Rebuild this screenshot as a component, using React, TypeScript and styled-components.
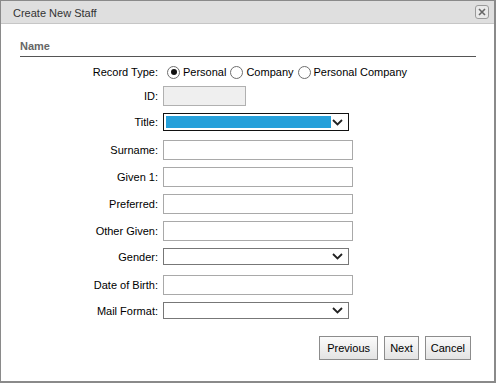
import React, { useState } from "react";
import styled, { createGlobalStyle } from "styled-components";

const GlobalStyle = createGlobalStyle`
  html, body {
    margin: 0;
    padding: 0;
    background: #fff;
    font-family: "Liberation Sans", Arial, sans-serif;
  }
`;

type Field =
  | { kind: "text"; label: string; disabled?: boolean; width?: number }
  | { kind: "select"; label: string; highlight?: boolean; focused?: boolean };

const fields: Field[] = [
  { kind: "text", label: "ID:", disabled: true, width: 83 },
  { kind: "select", label: "Title:", highlight: true, focused: true },
  { kind: "text", label: "Surname:" },
  { kind: "text", label: "Given 1:" },
  { kind: "text", label: "Preferred:" },
  { kind: "text", label: "Other Given:" },
  { kind: "select", label: "Gender:" },
  { kind: "text", label: "Date of Birth:" },
  { kind: "select", label: "Mail Format:" },
];

const recordTypes = ["Personal", "Company", "Personal Company"];

const Chevron = () => (
  <svg width="11" height="7" viewBox="0 0 11 7">
    <path d="M1 1 L5.5 5.5 L10 1" fill="none" stroke="#222" strokeWidth="1.8" />
  </svg>
);

export const App = () => {
  const [recordType, setRecordType] = useState("Personal");

  return (
    <>
      <GlobalStyle />
      <Dialog>
        <TitleBar>
          <TitleText>Create New Staff</TitleText>
          <CloseButton aria-label="close">
            <svg width="8" height="8" viewBox="0 0 8 8">
              <path d="M1 1 L7 7 M7 1 L1 7" stroke="#666" strokeWidth="1.6" />
            </svg>
          </CloseButton>
        </TitleBar>
        <Body>
          <SectionHeader>Name</SectionHeader>
          <RadioRow>
            <Label>Record Type:</Label>
            {recordTypes.map((t) => (
              <RadioLabel key={t}>
                <Radio
                  type="radio"
                  name="recordType"
                  checked={recordType === t}
                  onChange={() => setRecordType(t)}
                />
                {t}
              </RadioLabel>
            ))}
          </RadioRow>
          {fields.map((f) =>
            f.kind === "text" ? (
              <Row key={f.label} $h={20}>
                <Label>{f.label}</Label>
                <TextInput
                  type="text"
                  disabled={f.disabled}
                  $width={f.width ?? 190}
                />
              </Row>
            ) : (
              <Row key={f.label} $h={f.focused ? 18 : 17}>
                <Label>{f.label}</Label>
                <SelectBox $focused={!!f.focused}>
                  <SelectValue $highlight={!!f.highlight} />
                  <ChevronWrap>
                    <Chevron />
                  </ChevronWrap>
                </SelectBox>
              </Row>
            )
          )}
          <ButtonRow>
            <Button $minWidth={59}>Previous</Button>
            <Button>Next</Button>
            <Button>Cancel</Button>
          </ButtonRow>
        </Body>
      </Dialog>
    </>
  );
};

const Dialog = styled.div`
  width: 496px;
  height: 383px;
  box-sizing: border-box;
  border-style: solid;
  border-color: #8a8a8a;
  border-width: 1px 2px 2px 1px;
  background: #fff;
  display: flex;
  flex-direction: column;
`;

const TitleBar = styled.div`
  height: 22px;
  background: #dfdfdf;
  border-bottom: 1px solid #c6c6c6;
  display: flex;
  align-items: center;
  justify-content: space-between;
  padding: 0 5px 0 12px;
`;

const TitleText = styled.span`
  font-size: 11px;
  color: #333;
  margin-top: 1px;
`;

const CloseButton = styled.div`
  width: 14px;
  height: 14px;
  box-sizing: border-box;
  border: 1px solid #9a9a9a;
  border-radius: 3px;
  background: #e9e9e9;
  display: flex;
  align-items: center;
  justify-content: center;
`;

const Body = styled.div`
  padding: 14px 18px 0 19px;
`;

const SectionHeader = styled.div`
  font-size: 11px;
  font-weight: bold;
  color: #666;
  line-height: 16px;
  padding-bottom: 2px;
  border-bottom: 1px solid #555;
`;

const RadioRow = styled.div`
  display: flex;
  align-items: center;
  height: 22px;
  margin-top: 4px;
  font-size: 11px;
`;

const RadioLabel = styled.label`
  display: flex;
  align-items: center;
  color: #000;
`;

const Radio = styled.input`
  appearance: none;
  width: 13px;
  height: 13px;
  margin: 0 3px 0 4px;
  box-sizing: border-box;
  border: 1px solid #6e6e6e;
  border-radius: 50%;
  background: #fff;
  position: relative;
  &:checked::after {
    content: "";
    position: absolute;
    left: 2.5px;
    top: 2.5px;
    width: 6px;
    height: 6px;
    border-radius: 50%;
    background: #111;
  }
`;

const Row = styled.div<{ $h: number }>`
  display: flex;
  align-items: center;
  box-sizing: border-box;
  height: 27px;
  padding-top: 3px;
  padding-bottom: ${(p) => 24 - p.$h}px;
  font-size: 11px;
`;

const Label = styled.span`
  flex: 0 0 143px;
  box-sizing: border-box;
  padding-right: 5px;
  text-align: right;
  color: #000;
`;

const TextInput = styled.input<{ $width: number }>`
  width: ${(p) => p.$width}px;
  height: 20px;
  box-sizing: border-box;
  margin: 0;
  border: 1px solid #a9a9a9;
  background: #fff;
  font-family: inherit;
  font-size: 11px;
  &:disabled {
    background: #efefef;
    border-color: #b0b0b0;
  }
`;

const SelectBox = styled.div<{ $focused: boolean }>`
  width: 186px;
  height: 100%;
  box-sizing: border-box;
  border: 1px solid ${(p) => (p.$focused ? "#111" : "#777")};
  background: #fff;
  display: flex;
  align-items: stretch;
`;

const SelectValue = styled.div<{ $highlight: boolean }>`
  flex: 1;
  margin: 2px 17px 2px 2px;
  background: ${(p) => (p.$highlight ? "#26a0da" : "transparent")};
`;

const ChevronWrap = styled.div`
  width: 15px;
  display: flex;
  align-items: center;
  justify-content: flex-start;
  margin-left: -15px;
  position: relative;
  left: -1px;
`;

const ButtonRow = styled.div`
  display: flex;
  justify-content: flex-end;
  gap: 6px;
  margin-top: 10px;
  padding-right: 5px;
`;

const Button = styled.button<{ $minWidth?: number }>`
  height: 24px;
  min-width: ${(p) => p.$minWidth ?? 0}px;
  padding: 0 5px;
  border: 1px solid #8c8c8c;
  border-radius: 0;
  background: linear-gradient(#fbfbfb, #e3e3e3);
  font-family: inherit;
  font-size: 11px;
  color: #000;
`;

export default App;
